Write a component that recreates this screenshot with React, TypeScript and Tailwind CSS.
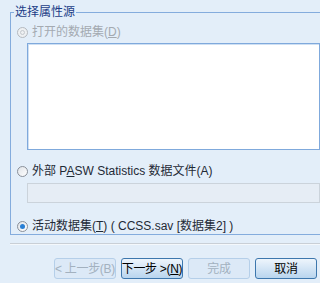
import React from "react";

const font = { fontFamily: '"Liberation Sans", "Noto Sans CJK SC", sans-serif' };

function Radio({ checked, disabled }: { checked?: boolean; disabled?: boolean }) {
  return (
    <span
      className={`flex h-[11px] w-[11px] shrink-0 items-center justify-center rounded-full border ${
        disabled ? "border-[#b4b9bf] bg-[#eef0f2]" : "border-[#8a9099] bg-gradient-to-br from-[#dfe3e8] to-white"
      }`}
    >
      {checked && <span className="h-[5px] w-[5px] rounded-full bg-[#2a7fd4]" />}
      {disabled && <span className="h-[5px] w-[5px] rounded-full border border-[#c4c8cd]" />}
    </span>
  );
}

function Button({ label, disabled }: { label: React.ReactNode; disabled?: boolean }) {
  return (
    <button
      className={`flex h-[21px] w-[62px] items-center justify-center whitespace-nowrap rounded-[3px] border text-[12px] tracking-[-0.3px] ${
        disabled
          ? "border-[#b5cfe9] bg-[#dce9f7] text-[#a3b1bf]"
          : "border-[#3d77ad] bg-gradient-to-b from-[#eef5fc] to-[#b9d5ee] text-black"
      }`}
    >
      {label}
    </button>
  );
}

export default function App() {
  return (
    <div className="h-[283px] w-[320px] overflow-hidden bg-[#e3eef9] text-[12px] leading-[14px]" style={font}>
      <fieldset className="ml-[10px] mt-[5px] h-[230px] border-b border-l border-t border-[#84acdd] pl-[6px]">
        <legend className="-ml-[3px] px-[1px] text-[12px] leading-[14px] text-[#1c3d87]">选择属性源</legend>
        <div className="flex items-center gap-[4px] pt-[6px] text-[#a4aab1]">
          <Radio disabled />
          <span>
            打开的数据集(<span className="underline">D</span>)
          </span>
        </div>
        <div className="ml-[10px] mt-[4px] h-[107px] border border-[#7fa9dc] bg-white shadow-[inset_1px_1px_0_#cfe0f3]" />
        <div className="mt-[14px] flex items-center gap-[4px] text-[#1f2a36]">
          <Radio />
          <span>
            外部 P<span className="underline">A</span>SW Statistics 数据文件(A)
          </span>
        </div>
        <div className="ml-[10px] mt-[5px] h-[20px] border border-[#cbd3db] bg-[#e6edf5]" />
        <div className="mt-[16px] flex items-center gap-[4px] text-[#1f2a36]">
          <Radio checked />
          <span>
            活动数据集(<span className="underline">T</span>) ( CCSS.sav [数据集2] )
          </span>
        </div>
      </fieldset>
      <div className="ml-[10px] mt-[8px] h-[2px] border-t border-[#c9cfd6] bg-[#f4f8fc]" />
      <div className="mt-[13px] flex justify-end gap-[5px] pr-[3px]">
        <Button disabled label="< 上一步(B)" />
        <Button
          label={
            <span>
              下一步 &gt;(<span className="underline">N</span>)
            </span>
          }
        />
        <Button disabled label="完成" />
        <Button label="取消" />
      </div>
    </div>
  );
}
